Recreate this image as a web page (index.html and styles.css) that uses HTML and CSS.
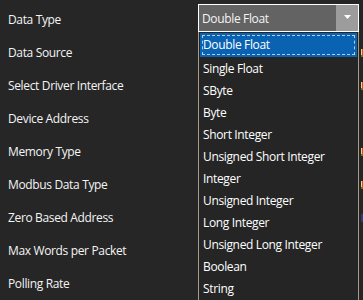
FILE: index.html
```html
<!DOCTYPE html>
<html>
<head>
<meta charset="utf-8">
<link rel="stylesheet" href="styles.css">
</head>
<body>
<div class="form">
  <div class="row">
    <span class="label">Data Type</span>
    <div class="combo">
      <span class="combo-text">Double Float</span>
      <span class="combo-btn"><svg width="7" height="4" viewBox="0 0 7 4"><path d="M0 0H7L3.5 4Z" fill="#ffffff"/></svg></span>
      <ul class="popup">
        <li class="item selected">Double Float</li>
        <li class="item">Single Float</li>
        <li class="item">SByte</li>
        <li class="item">Byte</li>
        <li class="item">Short Integer</li>
        <li class="item">Unsigned Short Integer</li>
        <li class="item">Integer</li>
        <li class="item">Unsigned Integer</li>
        <li class="item">Long Integer</li>
        <li class="item">Unsigned Long Integer</li>
        <li class="item">Boolean</li>
        <li class="item">String</li>
      </ul>
    </div>
    <span class="edge"></span>
  </div>
  <div class="row"><span class="label">Data Source</span><span class="field"></span><span class="edge"><i class="mark"></i></span></div>
  <div class="row"><span class="label">Select Driver Interface</span><span class="field"></span><span class="edge"><i class="mark"></i></span></div>
  <div class="row"><span class="label">Device Address</span><span class="field"></span><span class="edge"></span></div>
  <div class="row"><span class="label">Memory Type</span><span class="field"></span><span class="edge"><i class="mark"></i></span></div>
  <div class="row"><span class="label">Modbus Data Type</span><span class="field"></span><span class="edge"><i class="mark"></i></span></div>
  <div class="row"><span class="label">Zero Based Address</span><span class="field"></span><span class="edge"><i class="check"></i></span></div>
  <div class="row"><span class="label">Max Words per Packet</span><span class="field"></span><span class="edge"></span></div>
  <div class="row"><span class="label">Polling Rate</span><span class="field"></span><span class="edge"></span></div>
</div>
</body>
</html>
```
FILE: styles.css
```css
html, body {
  margin: 0;
  padding: 0;
  background: #262626;
  overflow: hidden;
}
body {
  width: 363px;
  height: 300px;
  font-family: "Open Sans", "Noto Sans", sans-serif;
  font-size: 12px;
  font-weight: 500;
  letter-spacing: -0.35px;
  color: #f4f4f4;
}
.form {
  padding-top: 3px;
}
.row {
  display: grid;
  grid-template-columns: 190px 161px 12px;
  height: 33px;
  align-items: center;
  padding-left: 8px;
}
.label {
  white-space: nowrap;
  line-height: 16px;
}
.field {
  height: 28px;
}
.combo {
  position: relative;
  align-self: start;
  margin-top: 1px;
  height: 28px;
  box-sizing: border-box;
  border: 1px solid #ffffff;
  background: #636363;
  display: flex;
  align-items: center;
}
.combo-text {
  flex: 1;
  padding-left: 3px;
  padding-top: 2px;
  line-height: 16px;
  white-space: nowrap;
}
.combo-btn {
  width: 22px;
  align-self: stretch;
  background: #9c9c9c;
  display: flex;
  align-items: center;
  justify-content: center;
  padding-bottom: 2px;
}
.popup {
  position: absolute;
  top: 27px;
  left: -1px;
  width: 161px;
  height: 280px;
  box-sizing: border-box;
  margin: 0;
  padding: 1px 1px 0 1px;
  list-style: none;
  background: #252525;
  border-left: 1px solid #a69a86;
  border-right: 1px solid #a69a86;
  z-index: 2;
}
.item {
  height: 21px;
  padding-top: 1px;
  line-height: 22px;
  padding-left: 3px;
  white-space: nowrap;
  color: #ffffff;
}
.item.selected {
  height: 24px;
  padding-top: 0;
  line-height: 24px;
  background: #0a63b2;
  outline: 1px dashed rgba(220, 235, 255, 0.8);
  outline-offset: -3px;
}
.edge {
  height: 33px;
  display: flex;
  align-items: center;
  padding-left: 2px;
}
.mark {
  display: block;
  width: 3px;
  height: 6px;
  background: linear-gradient(90deg, #f4d37a 0 1px, #e04a2a 1px 2px, #f0e0c0 2px);
  border-bottom: 2px solid #8a6a2a;
}
.check {
  display: block;
  width: 3px;
  height: 8px;
  background: #2a3a7a;
}
```
